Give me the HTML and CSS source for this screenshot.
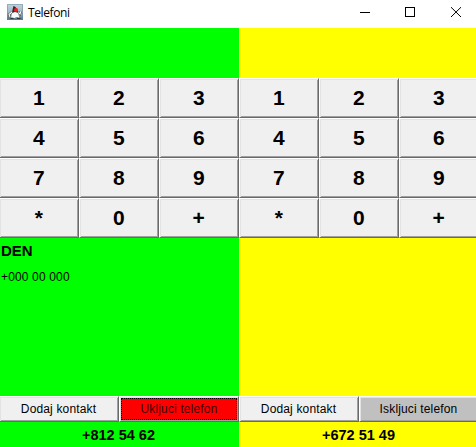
FILE: index.html
```
<!DOCTYPE html>
<html lang="sr">
<head>
<meta charset="utf-8">
<title>Telefoni</title>
<link rel="stylesheet" href="styles.css">
</head>
<body>
<header class="titlebar">
  <svg class="app-icon" viewBox="0 0 16 16" width="16" height="16">
    <defs><linearGradient id="sky" x1="0" y1="0" x2="0" y2="1"><stop offset="0" stop-color="#c3d3df"/><stop offset=".55" stop-color="#9fb6c6"/><stop offset="1" stop-color="#4d6d86"/></linearGradient></defs>
    <rect width="16" height="16" fill="url(#sky)"/>
    <path d="M.5 15.500V.5h15v15z" fill="none" stroke="#6d8799" stroke-opacity=".5"/>
    <path d="M5 8L2 10.500l1 2.500M11 8l2 2 1-3" fill="none" stroke="#444" stroke-width="2.200"/>
    <path d="M5 8L2 10.500l1 2.500M11 8l2 2 1-3" fill="none" stroke="#fff" stroke-width="1.100"/>
    <path d="M5.500 8h5l2 6-3-1-2 1-3.500-.3z" fill="#fafafa"/>
    <path d="M6.500 2Q10 3 11.500 9L8 8q-2 1-3 .8Q5.500 5 6.500 2z" fill="#302b30"/>
    <circle cx="9" cy="6" r="2" fill="#f02020"/>
    <path d="M3.500 14.300h3M10 14.300h3.500" stroke="#222"/>
  </svg>
  <h1 class="title">Telefoni</h1>
  <svg class="controls" viewBox="0 0 138 28" width="138" height="28" fill="none" stroke="#000">
    <path d="M22 12.500h10M67.500 7.500h9v9h-9z" shape-rendering="crispEdges"/>
    <path d="M113 7.200l10 9.800M123 7.200l-10 9.800"/>
  </svg>
</header>
<main class="phones">
  <section class="phone phone-green">
    <div class="display"></div>
    <div class="keypad">
      <button>1</button><button>2</button><button>3</button>
      <button>4</button><button>5</button><button>6</button>
      <button>7</button><button>8</button><button>9</button>
      <button>*</button><button>0</button><button>+</button>
    </div>
    <div class="contacts">
      <h2 class="name">DEN</h2>
      <p class="number">+000 00 000</p>
    </div>
    <div class="actions">
      <button>Dodaj kontakt</button>
      <button class="turn-on"><span class="focus">Ukljuci telefon</span></button>
    </div>
    <footer class="own-number">+812 54 62</footer>
  </section>
  <section class="phone phone-yellow">
    <div class="display"></div>
    <div class="keypad">
      <button>1</button><button>2</button><button>3</button>
      <button>4</button><button>5</button><button>6</button>
      <button>7</button><button>8</button><button>9</button>
      <button>*</button><button>0</button><button>+</button>
    </div>
    <div class="contacts"></div>
    <div class="actions">
      <button>Dodaj kontakt</button>
      <button class="turn-off">Iskljuci telefon</button>
    </div>
    <footer class="own-number">+672 51 49</footer>
  </section>
</main>
</body>
</html>
```

FILE: styles.css
```
* { box-sizing: border-box; }
body {
  margin: 0;
  width: 476px;
  height: 447px;
  overflow: hidden;
  background: #fff;
  color: #000;
  font-family: "Liberation Sans", Arial, sans-serif;
}
.titlebar {
  display: flex;
  height: 28px;
  padding-left: 7px;
}
.app-icon { margin-top: 4px; }
.title {
  margin: 0 0 0 5px;
  font: 12px/26px "Open Sans", sans-serif;
  letter-spacing: -0.4px;
}
.controls { margin-left: auto; }
.phones {
  display: grid;
  grid-template-columns: 240px 240px;
  width: 480px;
  height: 419px;
  margin-left: -1px;
}
.phone {
  display: grid;
  grid-template-rows: 50px 160px 158px 26px 25px;
}
.phone-green { background: #0f0; }
.phone-yellow { background: #ff0; }
.keypad {
  display: grid;
  grid-template: repeat(4, 40px) / repeat(3, 80px);
}
button {
  margin: 0;
  padding: 0 1px 0 0;
  border: 1px solid;
  border-color: #fff #696969 #696969 #fff;
  border-radius: 0;
  background: #f0f0f0;
  box-shadow: inset 1px 1px #e3e3e3, inset -1px -1px #a0a0a0;
  color: #000;
  font: 12px "Liberation Sans", Arial, sans-serif;
  letter-spacing: 0.15px;
}
.keypad button {
  font-size: 21px;
  font-weight: bold;
  letter-spacing: -0.5px;
}
.contacts { padding: 4px 2px; }
.name {
  margin: 0;
  font-size: 15px;
  line-height: 17px;
}
.number {
  margin: 10px 0 0;
  font-size: 12px;
  line-height: 16px;
  letter-spacing: 0.15px;
}
.actions {
  display: grid;
  grid-template-columns: 120px 120px;
}
.turn-on {
  padding: 1px;
  background: #f00;
  color: #400;
}
.focus {
  display: block;
  height: 22px;
  border: 1px dotted #000;
  line-height: 20px;
}
.turn-off { background: #c0c0c0; }
.own-number {
  padding-right: 1px;
  font-size: 14.5px;
  font-weight: bold;
  line-height: 26px;
  text-align: center;
}
```
